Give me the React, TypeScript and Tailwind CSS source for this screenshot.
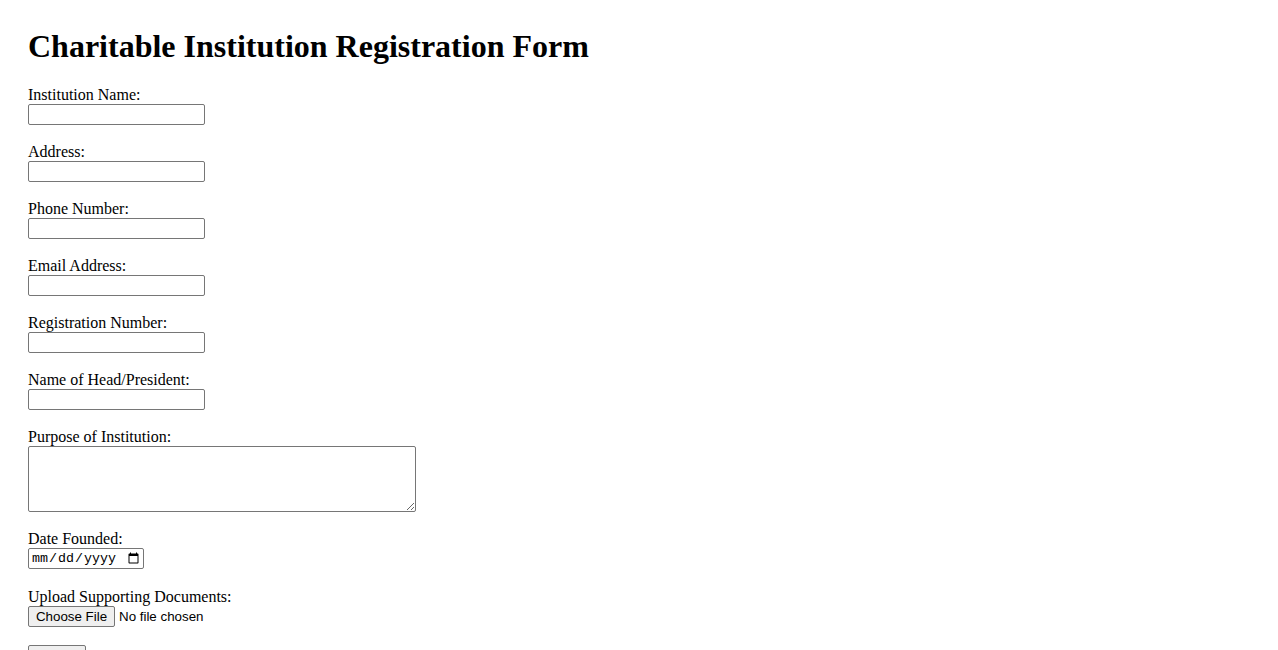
export default function App() {
  const fields = [
    "Institution Name:",
    "Address:",
    "Phone Number:",
    "Email Address:",
    "Registration Number:",
    "Name of Head/President:",
  ];

  return (
    <div className="min-h-screen bg-white pl-[28px] pt-[28px] text-black font-['Liberation_Serif',serif]">
      <h1 className="mb-[20px] text-[32px] font-bold leading-[37px]">
        Charitable Institution Registration Form
      </h1>
      <form className="flex flex-col items-start">
        {fields.map((label) => (
          <div key={label} className="mb-[17px] flex flex-col items-start">
            <label className="text-[16px] leading-[19px]">{label}</label>
            <input
              type="text"
              className="h-[21px] w-[177px] rounded-[2px] border border-[#767676] bg-white px-[2px] text-[13.33px] font-['Liberation_Sans',sans-serif]"
            />
          </div>
        ))}
        <div className="mb-[17px] flex flex-col items-start">
          <label className="text-[16px] leading-[19px]">Purpose of Institution:</label>
          <textarea className="h-[66px] w-[388px] rounded-[2px] border border-[#767676] bg-white px-[2px] text-[13.33px] font-['Liberation_Mono',monospace]" />
        </div>
        <div className="mb-[18px] flex flex-col items-start">
          <label className="text-[16px] leading-[19px]">Date Founded:</label>
          <input
            type="date"
            className="h-[21px] w-[116px] rounded-[2px] border border-[#767676] bg-white pl-[2px] pr-[1px] text-[13.33px] leading-[19px] font-['Liberation_Mono',monospace]"
          />
        </div>
        <div className="mb-[18px] flex flex-col items-start">
          <label className="text-[16px] leading-[19px]">Upload Supporting Documents:</label>
          <div className="flex h-[21px] items-center font-['Liberation_Sans',sans-serif] text-[13.33px]">
            <button
              type="button"
              className="h-[21px] w-[87px] rounded-[2px] border border-[#767676] bg-[#efefef] text-black"
            >
              Choose File
            </button>
            <span className="ml-[4px]">No file chosen</span>
          </div>
        </div>
        <button
          type="button"
          className="h-[21px] w-[58px] rounded-[2px] border border-[#767676] bg-[#efefef] font-['Liberation_Sans',sans-serif] text-[13.33px] text-black"
        >
          Submit
        </button>
      </form>
    </div>
  );
}
